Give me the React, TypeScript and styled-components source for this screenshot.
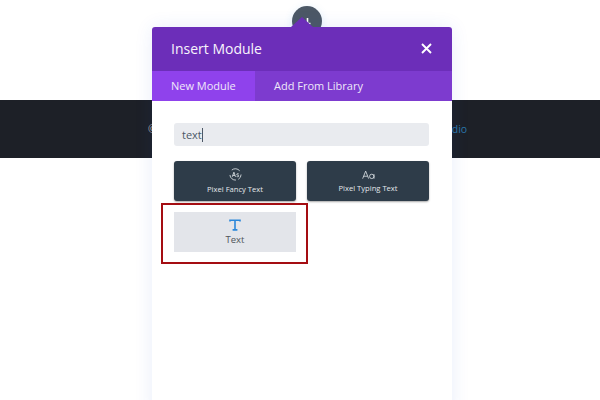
import React from "react";
import styled, { createGlobalStyle } from "styled-components";

const Global = createGlobalStyle`
  html, body { margin: 0; padding: 0; background: #fff; }
  body { width: 600px; height: 400px; overflow: hidden; font-family: "Open Sans", "Liberation Sans", sans-serif; }
  #root { width: 600px; height: 400px; }
`;

const Page = styled.div`
  position: relative;
  width: 600px;
  height: 400px;
  padding-top: 100px;
  box-sizing: border-box;
  overflow: hidden;
  background: #fff;
`;

const FooterBar = styled.footer`
  height: 58px;
  box-sizing: border-box;
  background: #1d2027;
  display: flex;
  align-items: center;
  padding-left: 148px;
  gap: 295px;
  font-size: 10.5px;
  width: 100%;
`;

const FooterText = styled.span`
  color: #b4b6ba;
`;

const FooterLink = styled.span`
  color: #2a76aa;
`;

const AddButton = styled.div`
  position: absolute;
  left: 292px;
  top: 6px;
  width: 30px;
  height: 30px;
  border-radius: 50%;
  background: #4c5866;
  box-shadow: 0 2px 8px rgba(43, 135, 218, 0.15);
`;

const ButtonGlyph = styled.svg`
  position: absolute;
  left: 0;
  top: 0;
`;

const Modal = styled.section`
  position: absolute;
  left: 152px;
  top: 27px;
  width: 300px;
  height: 390px;
  border-radius: 3px 3px 0 0;
  background: #fff;
  display: flex;
  flex-direction: column;
  box-shadow: 0 0 18px rgba(43, 87, 218, 0.1);

  &::before {
    content: "";
    position: absolute;
    left: 139px;
    top: -10px;
    border-left: 11px solid transparent;
    border-right: 11px solid transparent;
    border-bottom: 10px solid #6c2eb9;
    width: 0;
    height: 0;
  }
`;

const Header = styled.header`
  height: 44px;
  flex: none;
  box-sizing: border-box;
  background: #6c2eb9;
  border-radius: 3px 3px 0 0;
  display: flex;
  align-items: center;
  justify-content: space-between;
  padding: 0 20px 2px 19px;
`;

const Title = styled.h2`
  margin: 0;
  font-size: 14px;
  font-weight: 500;
  color: #f8f4fc;
`;

const CloseIcon = styled.svg`
  display: block;
`;

const Tabs = styled.nav`
  height: 30px;
  flex: none;
  display: flex;
  background: #7d3bcf;
`;

const Tab = styled.div<{ $active?: boolean }>`
  display: flex;
  align-items: center;
  padding: 0 19px 1px;
  width: ${(p) => (p.$active ? "103px" : "auto")};
  box-sizing: border-box;
  white-space: nowrap;
  font-size: 11px;
  font-weight: 500;
  color: #efe8f9;
  background: ${(p) => (p.$active ? "#8f42ec" : "transparent")};
`;

const Body = styled.div`
  padding: 22px 23px 0 22px;
  display: flex;
  flex-direction: column;
  gap: 15px;
`;

const Search = styled.div`
  height: 23px;
  border-radius: 3px;
  background: #e9ebef;
  display: flex;
  align-items: center;
  padding-left: 8px;
  font-size: 11px;
  font-weight: 400;
  color: #4c5866;
`;

const Caret = styled.span`
  display: inline-block;
  width: 1px;
  height: 14px;
  background: #4c5866;
`;

const Grid = styled.div`
  display: grid;
  grid-template-columns: 122px 122px;
  grid-auto-rows: 40px;
  column-gap: 11px;
  row-gap: 11px;
`;

const Card = styled.div<{ $light?: boolean }>`
  display: flex;
  flex-direction: column;
  align-items: center;
  justify-content: center;
  gap: ${(p) => (p.$light ? "2px" : "3px")};
  border-radius: ${(p) => (p.$light ? "0" : "3px")};
  background: ${(p) => (p.$light ? "#e3e5ea" : "#2e3c49")};
  box-shadow: ${(p) => (p.$light ? "none" : "0 1px 2px rgba(0,0,0,0.35)")};
  color: ${(p) => (p.$light ? "#50545a" : "#e4e8ec")};
  font-size: ${(p) => (p.$light ? "9.5px" : "7.6px")};
  font-weight: 500;
  line-height: ${(p) => (p.$light ? "13px" : "11px")};
  padding-top: 1px;
  box-sizing: border-box;
`;

const CardIcon = styled.svg`
  display: block;
`;

const Highlight = styled.div`
  position: absolute;
  left: 161px;
  top: 203px;
  width: 147px;
  height: 61px;
  box-sizing: border-box;
  border: 2px solid #a40d12;
`;

export default function App() {
  return (
    <Page>
      <Global />
      <FooterBar>
        <FooterText>©</FooterText>
        <FooterLink>dio</FooterLink>
      </FooterBar>
      <AddButton>
        <ButtonGlyph width="30" height="30" viewBox="0 0 30 30">
          <path d="M15.5 12v5.5h3" fill="none" stroke="#fff" strokeWidth="1.6" />
        </ButtonGlyph>
      </AddButton>
      <Modal>
        <Header>
          <Title>Insert Module</Title>
          <CloseIcon width="11" height="11" viewBox="0 0 11 11">
            <path d="M1 1l9 9M10 1l-9 9" stroke="#fff" strokeWidth="1.9" fill="none" />
          </CloseIcon>
        </Header>
        <Tabs>
          <Tab $active>New Module</Tab>
          <Tab>Add From Library</Tab>
        </Tabs>
        <Body>
          <Search>
            text<Caret />
          </Search>
          <Grid>
            <Card>
              <CardIcon width="13" height="13" viewBox="0 0 14 14" fill="none" stroke="#dfe4e8" strokeWidth="0.9">
                <path d="M3 2.2A6 6 0 0 1 11.5 3M13 7a6 6 0 0 1-3 5.2M7.5 13A6 6 0 0 1 1 7.5" />
                <path d="M3.5 9.5L5.3 4.5 7 9.5M4.1 8h2.4" />
                <path d="M10.5 6.4c-1-.6-2.2-.3-2.2.5 0 1 2.3.6 2.3 1.7 0 .9-1.4 1-2.4.5" />
              </CardIcon>
              Pixel Fancy Text
            </Card>
            <Card>
              <CardIcon width="13" height="10" viewBox="0 0 16 12" fill="none" stroke="#dfe4e8" strokeWidth="1">
                <path d="M0.8 10.5L4.5 1.2 8.2 10.5M2.1 7.5h4.8" />
                <circle cx="12" cy="7.7" r="2.7" />
                <path d="M14.8 5v5.5" />
              </CardIcon>
              Pixel Typing Text
            </Card>
            <Card $light>
              <CardIcon width="12" height="12" viewBox="0 0 12 12" fill="none" stroke="#2b87da" strokeWidth="1.6">
                <path d="M1 2.6V1.3h10v1.3M6 1.3v9.6M3.6 10.9h4.8" />
              </CardIcon>
              Text
            </Card>
          </Grid>
        </Body>
      </Modal>
      <Highlight />
    </Page>
  );
}
